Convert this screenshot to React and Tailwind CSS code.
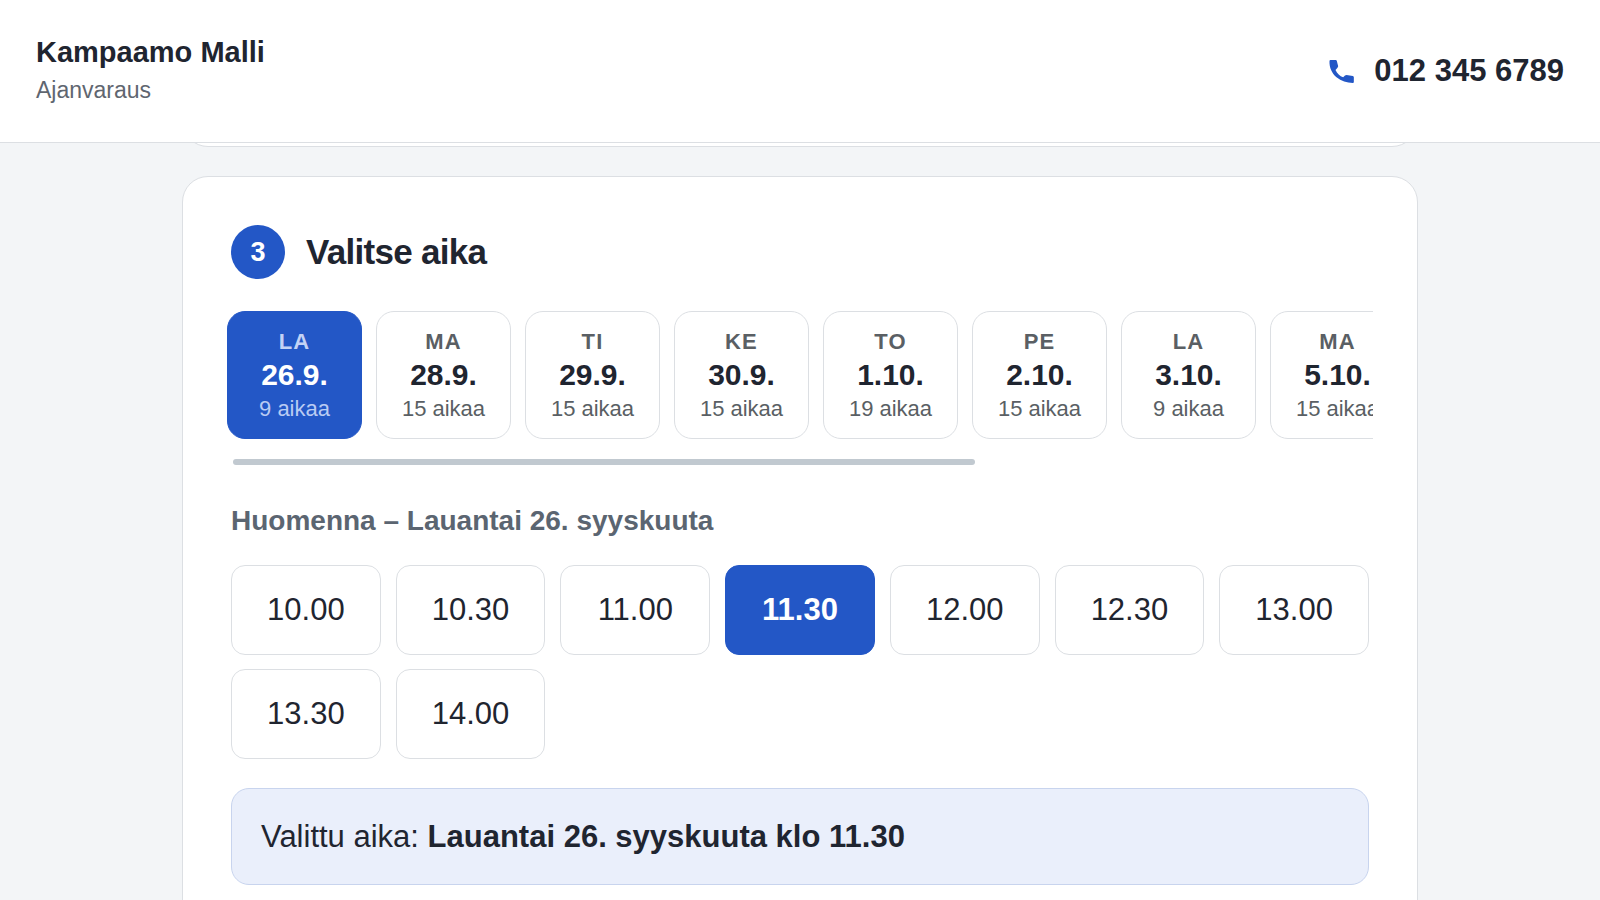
import { useState } from "react";

const days = [
    { weekday: "LA", date: "26.9.", free: 9 },
    { weekday: "MA", date: "28.9.", free: 15 },
    { weekday: "TI", date: "29.9.", free: 15 },
    { weekday: "KE", date: "30.9.", free: 15 },
    { weekday: "TO", date: "1.10.", free: 19 },
    { weekday: "PE", date: "2.10.", free: 15 },
    { weekday: "LA", date: "3.10.", free: 9 },
    { weekday: "MA", date: "5.10.", free: 15 },
];

const times = ["10.00", "10.30", "11.00", "11.30", "12.00", "12.30", "13.00", "13.30", "14.00"];

function Header() {
    return (
        <header className="relative z-10 flex items-center justify-between border-b border-[#dcdfe3] bg-white px-9 py-[33px]">
            <div>
                <p className="text-[29px] leading-[38px] font-bold">Kampaamo Malli</p>
                <p className="text-[23px] leading-[38px] text-[#5f6670]">Ajanvaraus</p>
            </div>
            <a href="tel:0123456789" className="flex items-center gap-5 text-[31px] leading-[40px] font-bold">
                <svg viewBox="0 0 74 69" className="h-[23px] w-[25px] fill-[#2357c6]" aria-hidden="true">
                    <path d="M1 3Q1 0 4 0H20Q22 0 23 3L27 19Q27 22 19 30C24 41 32 48 42 52Q48 45 52 45L71 48Q74 49 74 52V66Q74 69 71 69C53 69 36 64 22 52C8 40 0 22 1 3Z" />
                </svg>
                012 345 6789
            </a>
        </header>
    );
}

function DayButton({ day, selected, onClick }) {
    return (
        <button
            type="button"
            aria-pressed={selected}
            onClick={onClick}
            className={`flex h-32 w-[135px] shrink-0 flex-col items-center justify-center rounded-[18px] border ${
                selected ? "border-[#2357c6] bg-[#2357c6] text-white" : "border-[#dcdfe3] bg-white"
            }`}
        >
            <span className={`text-[22px] leading-[33px] font-bold tracking-wider ${selected ? "text-[#c3d2f5]" : "text-[#5a5f64]"}`}>
                {day.weekday}
            </span>
            <span className="text-[30px] leading-[34px] font-bold">{day.date}</span>
            <span className={`text-[22px] leading-[33px] ${selected ? "text-[#b9cbf3]" : "text-[#5a5f64]"}`}>
                {day.free} aikaa
            </span>
        </button>
    );
}

export default function App() {
    const [dayIndex, setDayIndex] = useState(0);
    const [time, setTime] = useState("11.30");

    return (
        <div className="h-screen overflow-hidden bg-[#f3f5f7] font-['Liberation_Sans',Arial,sans-serif] text-[#1f2530]">
            <Header />
            <main className="mx-auto max-w-[1236px]">
                {/* Bottom edge of the previous step, scrolled under the header */}
                <div className="-mt-12 h-[52px] rounded-[26px] border border-[#dcdfe3] bg-white" />

                <section className="mt-[29px] rounded-[26px] border border-[#dcdfe3] bg-white p-12">
                    <div className="flex items-center gap-[21px]">
                        <span className="flex size-[54px] items-center justify-center rounded-full bg-[#2357c6] text-[27px] font-bold text-white">
                            3
                        </span>
                        <h2 className="text-[35px] leading-[40px] font-bold tracking-[-0.02em]">Valitse aika</h2>
                    </div>

                    <div className="-mx-1 mt-8 flex gap-[14px] overflow-hidden">
                        {days.map((day, index) => (
                            <DayButton
                                key={day.date}
                                day={day}
                                selected={index === dayIndex}
                                onClick={() => setDayIndex(index)}
                            />
                        ))}
                    </div>
                    <div className="mx-[2px] mt-5 h-[6px]">
                        <div className="h-full w-[65.4%] rounded-full bg-[#c1c9d0]" />
                    </div>

                    <h3 className="mt-9 text-[28px] leading-[40px] font-bold text-[#5b6571]">
                        Huomenna – Lauantai 26. syyskuuta
                    </h3>

                    <div className="mt-6 grid grid-cols-7 gap-x-[15px] gap-y-[14px]">
                        {times.map((slot) => (
                            <button
                                key={slot}
                                type="button"
                                aria-pressed={slot === time}
                                onClick={() => setTime(slot)}
                                className={`h-[90px] rounded-[14px] border text-[31px] ${
                                    slot === time
                                        ? "border-[#2357c6] bg-[#2357c6] font-bold text-white"
                                        : "border-[#dcdfe3] bg-white"
                                }`}
                            >
                                {slot}
                            </button>
                        ))}
                    </div>

                    <p className="mt-[29px] rounded-[18px] border border-[#c8d4ee] bg-[#eaeffb] px-[29px] py-7 text-[31px] leading-[39px]">
                        Valittu aika: <strong>Lauantai 26. syyskuuta klo {time}</strong>
                    </p>
                </section>
            </main>
        </div>
    );
}
